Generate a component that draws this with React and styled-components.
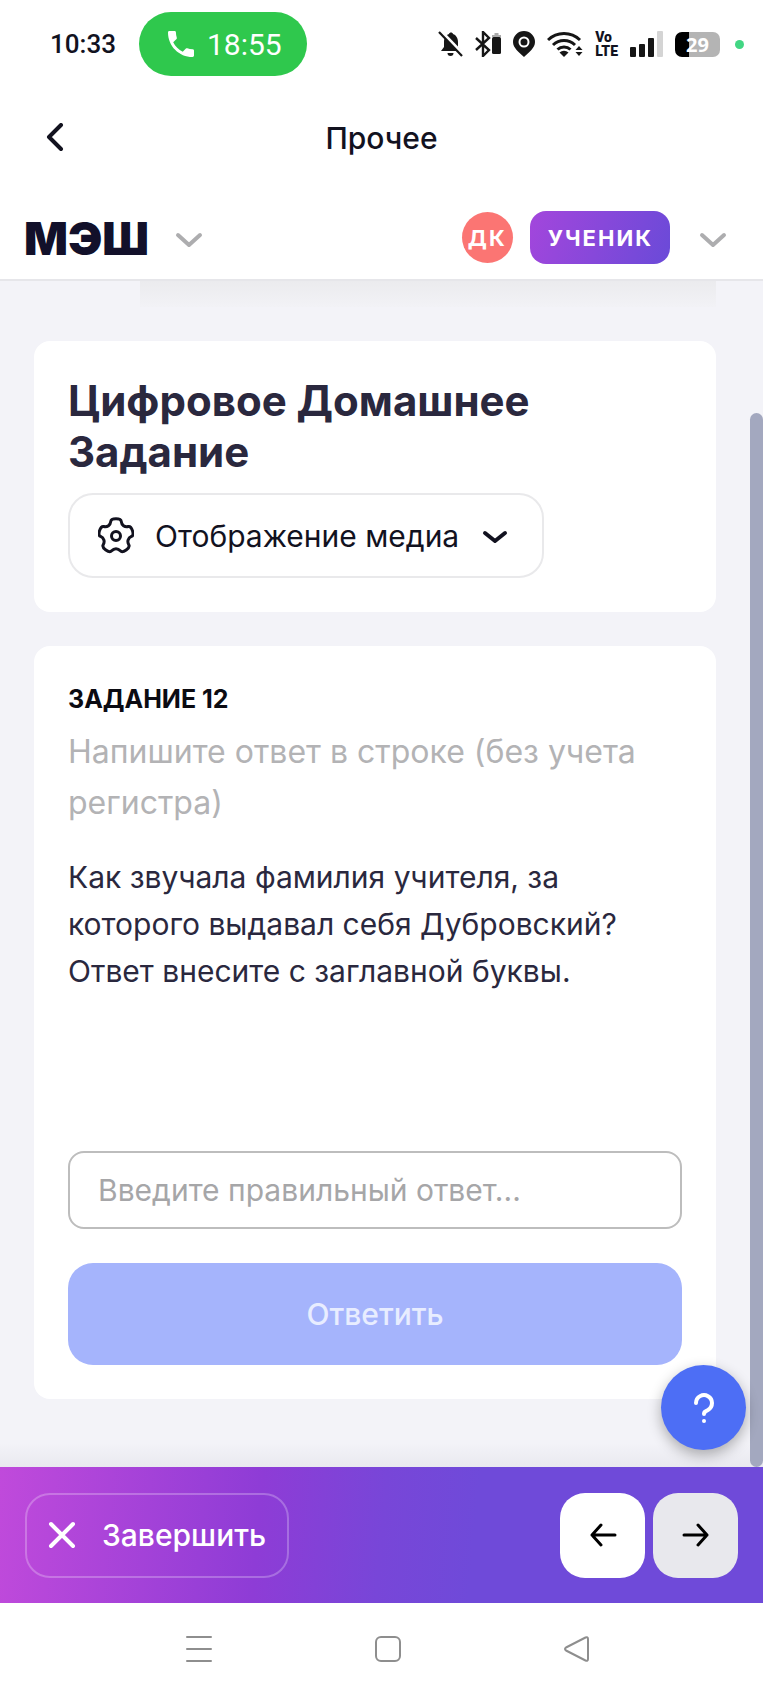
import styled, { createGlobalStyle } from 'styled-components';


const COLOR_TEXT = '#12121f';
const COLOR_MUTED = '#b3b3b5';
const COLOR_PAGE = '#f3f3f8';


const GlobalStyle = createGlobalStyle`
    * {
        box-sizing: border-box;
    }
    body {
        margin: 0;
        background: #fff;
        color: ${COLOR_TEXT};
        font-family: Inter, "Noto Sans", sans-serif;
    }
    button, input {
        margin: 0;
        font: inherit;
        color: inherit;
    }
    button {
        cursor: pointer;
    }
    svg {
        display: block;
        flex: none;
    }
`;
const Screen = styled.div`
    display: flex;
    flex-direction: column;
    min-height: 100vh;
`;
const StatusBar = styled.div`
    display: flex;
    align-items: center;
    height: 88px;
    padding: 0 19px 0 50px;
    font-family: Roboto, sans-serif;
`;
const Clock = styled.time`
    flex: 1;
    display: flex;
    align-items: center;
    gap: 23px;
    font-size: 26px;
    font-weight: 500;
`;
const CallPill = styled.button`
    display: flex;
    align-items: center;
    gap: 13px;
    height: 64px;
    padding: 0 25px 0 29px;
    border: 0;
    border-radius: 32px;
    background: #2fc84d;
    color: #fff;
    font-size: 30px;
    font-weight: 400;
`;
const StatusIcons = styled.div`
    display: flex;
    align-items: center;
    gap: 12px;
`;
const Volte = styled.span`
    display: grid;
    font-size: 14px;
    font-weight: 900;
    line-height: 14px;
`;
const Battery = styled.span`
    display: flex;
    align-items: center;
    justify-content: center;
    width: 45px;
    height: 25px;
    border-radius: 7px;
    background: linear-gradient(90deg, #000 32%, #b4b4b4 32%);
    color: #fff;
    font-family: "Noto Sans", sans-serif;
    font-size: 20px;
    font-weight: 700;
`;
const CameraDot = styled.span`
    width: 9px;
    height: 9px;
    margin-left: 3px;
    border-radius: 50%;
    background: #42d683;
`;
const TitleBar = styled.header`
    display: grid;
    grid-template-columns: 56px 1fr 56px;
    align-items: center;
    height: 100px;
    padding: 0 27px;
`;
const IconButton = styled.button`
    display: flex;
    align-items: center;
    justify-content: center;
    padding: 12px;
    border: 0;
    background: none;
`;
const PageName = styled.h1`
    margin: 0;
    font-size: 30px;
    font-weight: 500;
    text-align: center;
`;
const SiteHeader = styled.header`
    display: flex;
    align-items: center;
    height: 93px;
    padding: 8px 24px 0;
    border-bottom: 2px solid #e6e6ea;
`;
const Logo = styled.a`
    margin-right: 14px;
    color: #12102a;
    font-size: 46px;
    font-weight: 900;
    line-height: 48px;
    text-decoration: none;
`;
const Account = styled.div`
    display: flex;
    align-items: center;
    gap: 17px;
    margin-left: auto;
`;
const Avatar = styled.span`
    display: flex;
    align-items: center;
    justify-content: center;
    width: 51px;
    height: 51px;
    border-radius: 50%;
    background: #fb7573;
    color: #fff;
    font-size: 22px;
    font-weight: 700;
    letter-spacing: 2px;
`;
const Role = styled.span`
    display: flex;
    align-items: center;
    height: 53px;
    padding: 0 17px 0 18px;
    border-radius: 16px;
    background: linear-gradient(110deg, #a346dc, #6a4ad8);
    color: #fff;
    font-size: 22px;
    font-weight: 700;
    letter-spacing: 2px;
`;
const Main = styled.main`
    position: relative;
    flex: 1;
    display: flex;
    flex-direction: column;
    gap: 34px;
    padding: 0 47px 68px 34px;
    background: linear-gradient(0deg, #e9e9ef, ${COLOR_PAGE} 24px);
`;
const HiddenCard = styled.div`
    height: 26px;
    margin-left: 106px;
    background: linear-gradient(180deg, #ebebee, #f2f2f6);
`;
const Card = styled.section`
    display: flex;
    flex-direction: column;
    align-items: flex-start;
    padding: 34px;
    border-radius: 16px;
    background: #fff;
`;
const Heading = styled.h2`
    margin: 0 0 16px;
    color: #2a283e;
    font-size: 42px;
    font-weight: 700;
    line-height: 51px;
`;
const OutlineButton = styled.button`
    display: flex;
    align-items: center;
    height: 85px;
    border: 2px solid ${props => props.$light ? 'rgba(255, 255, 255, 0.25)' : '#e9e9eb'};
    border-radius: 25px;
    padding: ${props => props.$light ? '0 21px' : '0 34px 0 28px'};
    gap: ${props => props.$light ? '26px' : '21px'};
    background: none;
    color: ${props => props.$light ? '#fff' : COLOR_TEXT};
    font-size: 30px;
    font-weight: ${props => props.$light ? 500 : 400};
`;
const TaskNumber = styled.h3`
    margin: 0;
    color: #0b0b12;
    font-size: 25px;
    font-weight: 700;
    line-height: 38px;
`;
const Hint = styled.p`
    margin: 8px 0 0;
    color: ${COLOR_MUTED};
    font-size: 32px;
    line-height: 51px;
`;
const Question = styled.p`
    margin: 26px 0 0;
    color: #2a283e;
    font-size: 30px;
    font-weight: 400;
    line-height: 47px;
`;
const AnswerForm = styled.form`
    display: flex;
    flex-direction: column;
    gap: 34px;
    width: 100%;
    margin-top: 156px;
`;
const AnswerInput = styled.input`
    width: 100%;
    height: 78px;
    padding: 0 28px;
    border: 2px solid #bdbdbd;
    border-radius: 16px;
    background: #fff;
    font-size: 30px;
    &::placeholder {
        color: #a6a6a8;
        opacity: 1;
    }
`;
const SubmitButton = styled.button`
    height: 102px;
    border: 0;
    border-radius: 25px;
    background: #a5b4fc;
    color: #e8edff;
    font-size: 30px;
    font-weight: 500;
`;
const HelpButton = styled.button`
    position: absolute;
    right: 17px;
    bottom: 17px;
    display: flex;
    align-items: center;
    justify-content: center;
    width: 85px;
    height: 85px;
    border: 0;
    border-radius: 50%;
    background: #4d6ef5;
    color: #fff;
    box-shadow: 0 5px 14px rgba(0, 0, 0, 0.3);
`;
const ScrollThumb = styled.div`
    position: absolute;
    top: 132px;
    right: 0;
    bottom: 0;
    width: 13px;
    border-radius: 7px;
    background: #a3a8bf;
`;
const ActionBar = styled.footer`
    display: flex;
    align-items: center;
    height: 136px;
    padding: 0 25px;
    background: linear-gradient(95deg, #c04adb 0%, #8e3cd6 34%, #7846d8 50%, #6f4ad9 62%);
`;
const Steps = styled.nav`
    display: flex;
    gap: 8px;
    margin-left: auto;
`;
const StepButton = styled.button`
    display: flex;
    align-items: center;
    justify-content: center;
    width: 85px;
    height: 85px;
    border: 0;
    border-radius: 25px;
    background: ${props => props.$dim ? '#e8e8ed' : '#fff'};
    color: #000;
`;
const SystemNav = styled.nav`
    display: grid;
    grid-template-columns: repeat(3, 189px);
    justify-content: center;
    justify-items: center;
    align-items: center;
    height: 93px;
    padding: 0 0 2px 12px;
    color: #8e8e8e;
`;
const HeaderToggle = styled(IconButton)`
    padding: 15px 12px 11px;
    color: #adadaf;
`;


function LineIcon({ width, height, stroke = 4, children }) {
    return (
        <svg
            width={width}
            height={height}
            viewBox={`0 0 ${width} ${height}`}
            fill='none'
            stroke='currentColor'
            strokeWidth={stroke}
            strokeLinecap='round'
            strokeLinejoin='round'
            aria-hidden='true'
        >
            {children}
        </svg>
    )
}

function PhoneIcon() {
    return (
        <svg width='26' height='26' viewBox='3 3 18 18' fill='currentColor' aria-hidden='true'>
            <path d='M6.6 10.8c1.4 2.8 3.8 5.1 6.6 6.6l2.2-2.2c.3-.3.7-.4 1-.2 1.1.4 2.3.6 3.6.6.6 0 1 .4 1 1V20c0 .6-.4 1-1 1C10.6 21 3 13.4 3 4c0-.6.4-1 1-1h3.5c.6 0 1 .4 1 1 0 1.2.2 2.4.6 3.6.1.3 0 .7-.2 1z' />
        </svg>
    )
}

function BellOffIcon() {
    return (
        <svg width='25' height='26' viewBox='0 0 25 26' aria-hidden='true'>
            <path d='M3 20l3-4v-5c0-4 2-7 5-8 .3-2 3.7-2 4 0 3 1 5 4 5 8v5l3 4z' fill='#161616' />
            <path d='M9.5 22h6a3 3 0 0 1-6 0z' fill='#161616' />
            <path d='M3 0l22 23' stroke='#fff' strokeWidth='3' />
            <path d='M1 1l23 24' stroke='#161616' strokeWidth='2.2' />
        </svg>
    )
}

function BluetoothIcon() {
    return (
        <svg width='26' height='26' viewBox='0 0 26 26' fill='none' aria-hidden='true'>
            <path d='M1 7l13 12-6 6V1l6 6L1 19' stroke='#161616' strokeWidth='2.4' />
            <path d='M17 6V4h2.5V2h4v2H26v2z' fill='#aaa' />
            <rect x='17' y='6' width='9' height='17' rx='1.5' fill='#161616' />
        </svg>
    )
}

function PinIcon() {
    return (
        <svg width='22' height='26' viewBox='0 0 22 26' aria-hidden='true'>
            <path d='M11 0a11 11 0 0 1 11 11c0 6-6 10-11 15C6 21 0 17 0 11A11 11 0 0 1 11 0z' fill='#161616' />
            <circle cx='11' cy='11' r='4.5' fill='#161616' stroke='#fff' strokeWidth='2' />
        </svg>
    )
}

function WifiIcon() {
    return (
        <svg width='36' height='26' viewBox='0 0 36 26' fill='none' aria-hidden='true'>
            <path d='M1 9a23 23 0 0 1 32 0M6 14a16 16 0 0 1 22 0M10.5 18.5a9.5 9.5 0 0 1 13 0' stroke='#161616' strokeWidth='3' />
            <path d='M12.5 21.5a7 7 0 0 1 9 0L17 26z' fill='#161616' />
            <path d='M32 15l3.5 4h-7zM32 25l3.5-4h-7z' fill='#161616' />
        </svg>
    )
}

function SignalIcon() {
    return (
        <svg width='33' height='26' viewBox='0 0 33 26' fill='#161616' aria-hidden='true'>
            <rect x='0' y='16' width='6' height='10' rx='1' />
            <rect x='9' y='13' width='6' height='13' rx='1' />
            <rect x='18' y='7' width='6' height='19' rx='1' />
            <rect x='27' y='0' width='6' height='26' rx='1' fill='#d4d4d4' />
        </svg>
    )
}

// outline of a gear with five wide teeth, corners rounded off
function gearPath(cx, cy) {
    const corners = [];
    for (let tooth = 0; tooth < 5; tooth++) {
        [[-25, 13], [-16, 18], [16, 18], [25, 13]].forEach(([turn, radius]) => {
            const angle = (tooth*72 - 90 + turn) * Math.PI/180;
            corners.push([cx + radius*Math.cos(angle), cy + radius*Math.sin(angle)]);
        });
    }
    const middles = corners.map((corner, i) => {
        const next = corners[(i + 1) % corners.length];
        return [(corner[0] + next[0])/2, (corner[1] + next[1])/2];
    });
    const curves = corners.map((corner, i) => `Q${corner} ${middles[i]}`);
    return `M${middles.at(-1)}${curves.join('')}Z`;
}

function GearIcon() {
    return (
        <LineIcon width={36} height={38} stroke={3}>
            <path d={gearPath(18, 19)} />
            <circle cx='18' cy='19' r='4.5' />
        </LineIcon>
    )
}

function ChevronDown() {
    return (
        <LineIcon width={28} height={16}>
            <path d='M3 3l11 10 11-10' />
        </LineIcon>
    )
}


export default function App() {
    return (
        <Screen>
            <GlobalStyle />
            <StatusBar>
                <Clock>
                    10:33
                    <CallPill type='button'>
                        <PhoneIcon />
                        18:55
                    </CallPill>
                </Clock>
                <StatusIcons>
                    <BellOffIcon />
                    <BluetoothIcon />
                    <PinIcon />
                    <WifiIcon />
                    <Volte>
                        <span>Vo</span>
                        <span>LTE</span>
                    </Volte>
                    <SignalIcon />
                    <Battery>29</Battery>
                    <CameraDot />
                </StatusIcons>
            </StatusBar>
            <TitleBar>
                <IconButton type='button' aria-label='Назад'>
                    <LineIcon width={18} height={30}>
                        <path d='M15 2L3 14l12 12' />
                    </LineIcon>
                </IconButton>
                <PageName>Прочее</PageName>
            </TitleBar>
            <SiteHeader>
                <Logo href='#'>МЭШ</Logo>
                <HeaderToggle type='button' aria-label='Меню'>
                    <ChevronDown />
                </HeaderToggle>
                <Account>
                    <Avatar>ДК</Avatar>
                    <Role>УЧЕНИК</Role>
                    <HeaderToggle type='button' aria-label='Профиль'>
                        <ChevronDown />
                    </HeaderToggle>
                </Account>
            </SiteHeader>
            <Main>
                <HiddenCard />
                <Card>
                    <Heading>Цифровое Домашнее Задание</Heading>
                    <OutlineButton type='button'>
                        <GearIcon />
                        Отображение медиа
                        <LineIcon width={28} height={16}>
                            <path d='M5 5l10 8 10-8' />
                        </LineIcon>
                    </OutlineButton>
                </Card>
                <Card>
                    <TaskNumber>ЗАДАНИЕ 12</TaskNumber>
                    <Hint>Напишите ответ в строке (без учета регистра)</Hint>
                    <Question>
                        Как звучала фамилия учителя, за которого выдавал себя Дубровский?
                        Ответ внесите с заглавной буквы.
                    </Question>
                    <AnswerForm onSubmit={event => event.preventDefault()}>
                        <AnswerInput
                            type='text'
                            aria-label='Ответ'
                            placeholder='Введите правильный ответ...'
                        />
                        <SubmitButton type='submit'>Ответить</SubmitButton>
                    </AnswerForm>
                </Card>
                <ScrollThumb />
                <HelpButton type='button' aria-label='Помощь'>
                    <LineIcon width={22} height={32}>
                        <path d='M3 11a8 8 0 1 1 12 7c-3 1.5-4 2-4 4' />
                        <circle cx='11' cy='29' r='2' fill='currentColor' stroke='none' />
                    </LineIcon>
                </HelpButton>
            </Main>
            <ActionBar>
                <OutlineButton type='button' $light>
                    <LineIcon width={28} height={28}>
                        <path d='M3 3l22 22M25 3L3 25' />
                    </LineIcon>
                    Завершить
                </OutlineButton>
                <Steps>
                    <StepButton type='button' aria-label='Предыдущее задание'>
                        <LineIcon width={28} height={24} stroke={3}>
                            <path d='M26 12H3M12 2l-9 10 9 10' />
                        </LineIcon>
                    </StepButton>
                    <StepButton type='button' aria-label='Следующее задание' $dim>
                        <LineIcon width={28} height={24} stroke={3}>
                            <path d='M2 12h23M16 2l9 10-9 10' />
                        </LineIcon>
                    </StepButton>
                </Steps>
            </ActionBar>
            <SystemNav>
                <IconButton type='button' aria-label='Недавние'>
                    <LineIcon width={26} height={26} stroke={2}>
                        <path d='M1 1h24M1 13h24M1 25h24' />
                    </LineIcon>
                </IconButton>
                <IconButton type='button' aria-label='Домой'>
                    <LineIcon width={26} height={26} stroke={2}>
                        <rect x='1' y='1' width='24' height='24' rx='5' />
                    </LineIcon>
                </IconButton>
                <IconButton type='button' aria-label='Назад в системе'>
                    <LineIcon width={26} height={26} stroke={2}>
                        <path d='M2 11.5L21.5 1.5Q24 .5 24 3v20q0 2.5-2.5 1.5L2 14.5q-2-1.5 0-3z' />
                    </LineIcon>
                </IconButton>
            </SystemNav>
        </Screen>
    )
}
